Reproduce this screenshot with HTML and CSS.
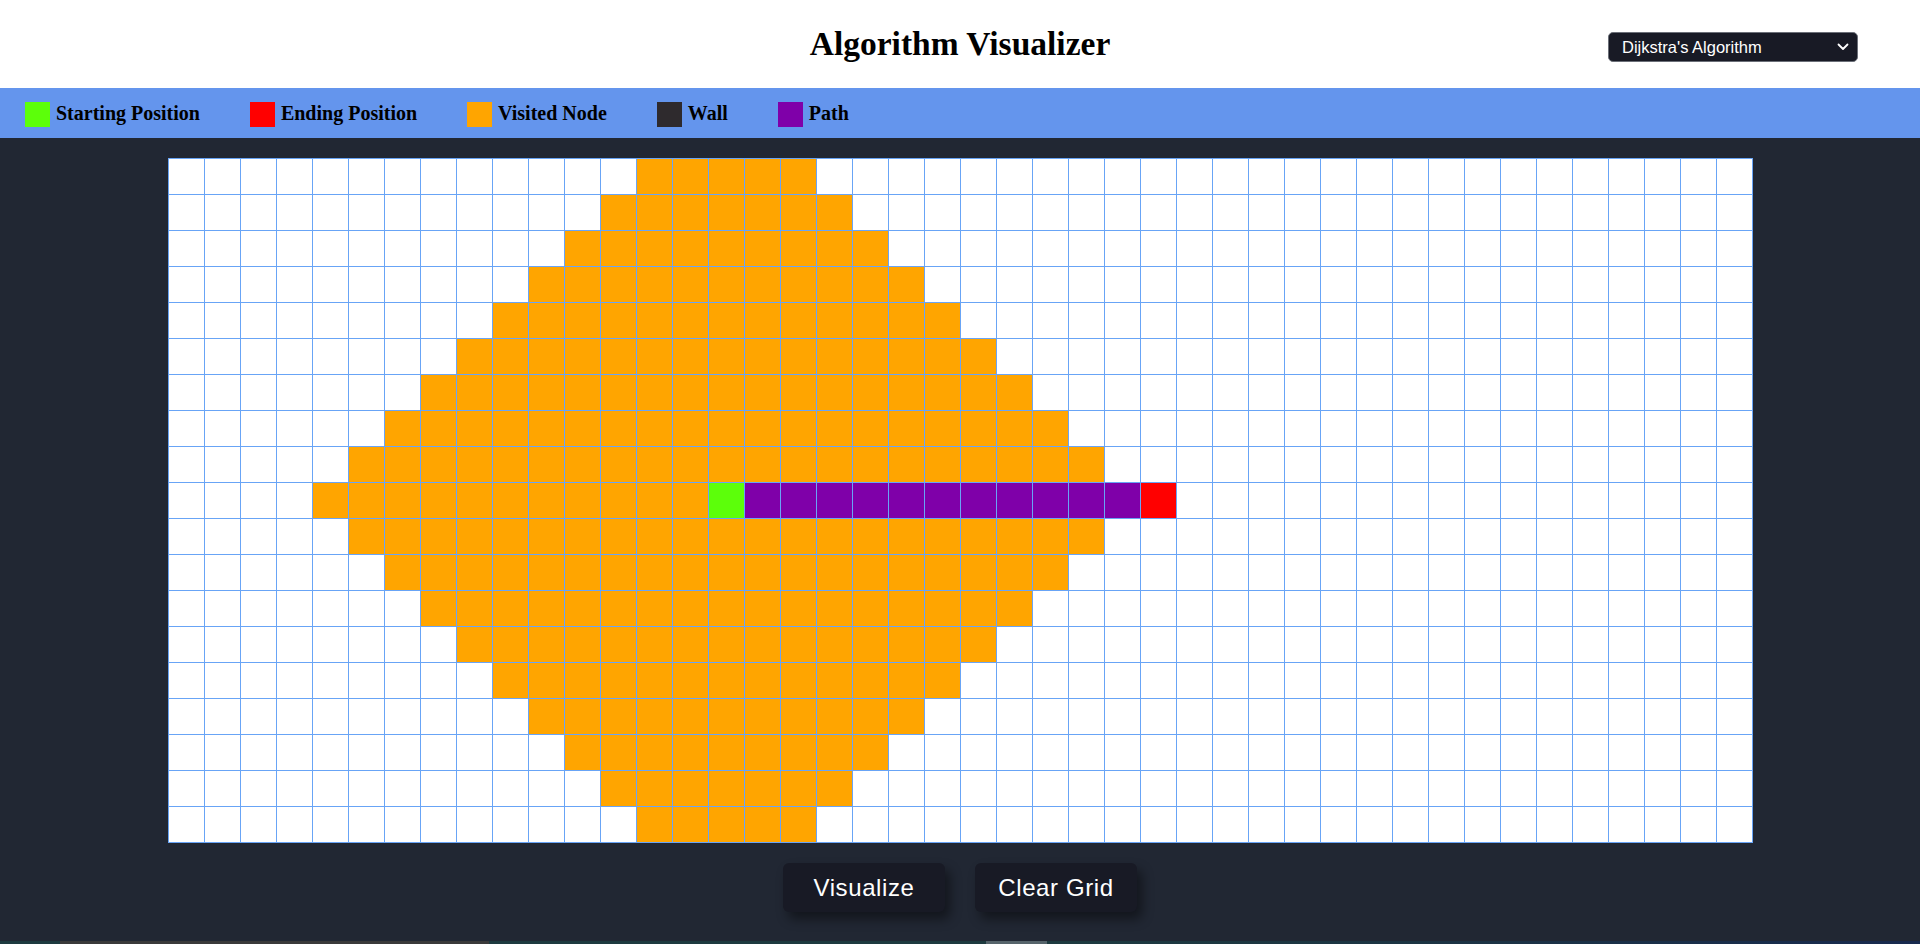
FILE: index.html
```html
<!DOCTYPE html>
<html lang="en">
<head>
<meta charset="utf-8">
<title>Algorithm Visualizer</title>
<link rel="stylesheet" href="styles.css">
</head>
<body>
<header class="topbar">
  <div class="topbar-side"></div>
  <h1 class="title">Algorithm Visualizer</h1>
  <div class="topbar-side topbar-right">
    <div class="algo-select">
      <select class="algo-select-input" aria-label="Algorithm">
        <option>Dijkstra's Algorithm</option>
        <option>A* Search</option>
        <option>Breadth First Search</option>
        <option>Depth First Search</option>
      </select>
      <svg class="algo-select-chevron" width="12" height="8" viewBox="0 0 12 8" aria-hidden="true">
        <path d="M1.5 1.5 L6 6 L10.5 1.5" fill="none" stroke="#ffffff" stroke-width="1.8" stroke-linecap="round" stroke-linejoin="round"/>
      </svg>
    </div>
  </div>
</header>

<nav class="legend">
  <div class="legend-item"><span class="swatch swatch-start"></span>Starting Position</div>
  <div class="legend-item"><span class="swatch swatch-end"></span>Ending Position</div>
  <div class="legend-item"><span class="swatch swatch-visited"></span>Visited Node</div>
  <div class="legend-item"><span class="swatch swatch-wall"></span>Wall</div>
  <div class="legend-item"><span class="swatch swatch-path"></span>Path</div>
</nav>

<main class="board">
  <div class="grid" id="grid"></div>
  <div class="actions">
    <button class="btn" type="button">Visualize</button>
    <button class="btn" type="button">Clear Grid</button>
  </div>
</main>

<div class="bottom-strip"></div>

<script src="script.js"></script>
</body>
</html>
```

FILE: styles.css
```css
* {
  box-sizing: border-box;
}

html, body {
  margin: 0;
  padding: 0;
}

body {
  background: #212733;
  font-family: "Liberation Serif", "Times New Roman", serif;
  overflow: hidden;
}

.topbar {
  height: 88px;
  background: #ffffff;
  display: grid;
  grid-template-columns: 1fr auto 1fr;
  align-items: center;
}

.title {
  margin: 0;
  font-family: "Liberation Serif", "Times New Roman", serif;
  font-weight: bold;
  font-size: 33.5px;
  color: #000000;
  line-height: 1.1;
}

.topbar-right {
  display: flex;
  justify-content: flex-end;
  padding-right: 62px;
  padding-top: 6px;
}

.algo-select {
  position: relative;
  width: 250px;
  height: 30px;
}

.algo-select-input {
  appearance: none;
  -webkit-appearance: none;
  width: 100%;
  height: 100%;
  background: #181a25;
  color: #ffffff;
  border: 1px solid #6b6f78;
  border-radius: 5px;
  font-family: "Liberation Sans", Arial, sans-serif;
  font-size: 16.5px;
  padding: 0 30px 0 13px;
  outline: none;
}

.algo-select-chevron {
  position: absolute;
  right: 9px;
  top: 11px;
  pointer-events: none;
}

.legend {
  height: 50px;
  background: #6495ed;
  display: flex;
  align-items: center;
  gap: 50px;
  padding: 0 25px;
}

.legend-item {
  display: flex;
  align-items: center;
  gap: 6px;
  font-family: "Liberation Serif", "Times New Roman", serif;
  font-weight: bold;
  font-size: 20px;
  line-height: 23px;
  color: #000000;
  white-space: nowrap;
}

.legend-item-text {
  display: inline-block;
}

.swatch {
  display: inline-block;
  width: 25px;
  height: 25px;
  margin-top: 2px;
}

.swatch-start { background: #5cff0a; }
.swatch-end { background: #ff0000; }
.swatch-visited { background: #ffa500; }
.swatch-wall { background: #2e2a2d; }
.swatch-path { background: #7f00a9; }

.board {
  padding-top: 20px;
  display: flex;
  flex-direction: column;
  align-items: center;
}

.grid {
  display: grid;
  grid-template-columns: repeat(44, 36px);
  grid-auto-rows: 36px;
  border-left: 1px solid #68a4f6;
  border-top: 1px solid #68a4f6;
  margin-left: 1px;
  background: #ffffff;
}

.cell {
  width: 36px;
  height: 36px;
  border-right: 1px solid #68a4f6;
  border-bottom: 1px solid #68a4f6;
  background: #ffffff;
}

.cell-visited { background: #ffa500; }
.cell-start { background: #5cff0a; }
.cell-end { background: #ff0000; }
.cell-path { background: #7f00a9; }
.cell-wall { background: #2e2a2d; }

.actions {
  margin-top: 20px;
  display: flex;
  gap: 30px;
  justify-content: center;
}

.btn {
  width: 162px;
  height: 49px;
  background: #181a25;
  color: #ffffff;
  border: none;
  border-radius: 6px;
  font-family: "Liberation Sans", Arial, sans-serif;
  font-size: 24px;
  letter-spacing: 0.6px;
  box-shadow: 5px 7px 12px rgba(0, 0, 0, 0.45);
  cursor: pointer;
}

.bottom-strip {
  margin-top: 29px;
  height: 3px;
  background: linear-gradient(90deg,
    #1d3a3f 0, #1d3a3f 60px,
    #3a3a3a 60px, #3a3a3a 489px,
    #1d3a3f 489px, #1d3a3f 986px,
    #56646b 986px, #56646b 1047px,
    #1d3a3f 1047px, #1c3442 1400px, #17294e 1920px);
}
```

FILE: script.js
```js
(function () {
  var ROWS = 19;
  var COLS = 44;
  var start = { r: 9, c: 15 };
  var end = { r: 9, c: 27 };
  var grid = document.getElementById('grid');
  var frag = document.createDocumentFragment();

  for (var r = 0; r < ROWS; r++) {
    for (var c = 0; c < COLS; c++) {
      var cell = document.createElement('div');
      cell.className = 'cell';
      var dist = Math.abs(r - start.r) + Math.abs(c - start.c);
      if (r === start.r && c === start.c) {
        cell.className += ' cell-start';
      } else if (r === end.r && c === end.c) {
        cell.className += ' cell-end';
      } else if (r === start.r && c > start.c && c < end.c) {
        cell.className += ' cell-path';
      } else if (dist <= 11) {
        cell.className += ' cell-visited';
      }
      frag.appendChild(cell);
    }
  }
  grid.appendChild(frag);
})();
```
